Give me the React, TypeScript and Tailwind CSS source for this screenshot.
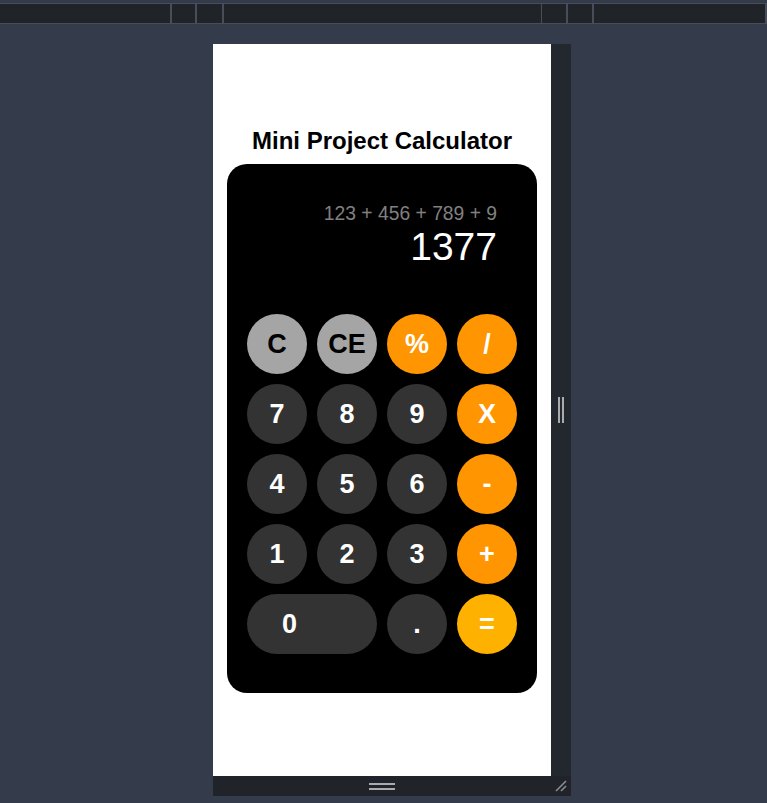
const keys = [
  { label: "C", kind: "fn" },
  { label: "CE", kind: "fn" },
  { label: "%", kind: "op" },
  { label: "/", kind: "op" },
  { label: "7", kind: "num" },
  { label: "8", kind: "num" },
  { label: "9", kind: "num" },
  { label: "X", kind: "op" },
  { label: "4", kind: "num" },
  { label: "5", kind: "num" },
  { label: "6", kind: "num" },
  { label: "-", kind: "op" },
  { label: "1", kind: "num" },
  { label: "2", kind: "num" },
  { label: "3", kind: "num" },
  { label: "+", kind: "op" },
  { label: "0", kind: "zero" },
  { label: ".", kind: "num" },
  { label: "=", kind: "eq" },
];

const keyStyles: Record<string, string> = {
  fn: "bg-[#a5a5a5] text-black",
  op: "bg-[#ff9500] text-white",
  num: "bg-[#333333] text-white",
  zero: "col-span-2 bg-[#333333] text-white justify-start pl-[35px]",
  eq: "bg-[#ffb100] text-white",
};

function Calculator() {
  return (
    <div className="mx-[14px] rounded-[20px] bg-black px-5 pt-10 pb-[39px]">
      <div className="flex flex-col items-end pr-5">
        <div className="text-[19.3px] leading-[20px] text-[#808080]">123 + 456 + 789 + 9</div>
        <div className="text-[39px] leading-[46px] text-white">1377</div>
      </div>
      <div className="mt-[44px] grid grid-cols-4 gap-[10px]">
        {keys.map((k) => (
          <button
            key={k.label}
            className={
              "flex h-[60px] items-center justify-center rounded-full text-[27px] font-bold " +
              keyStyles[k.kind]
            }
          >
            {k.label}
          </button>
        ))}
      </div>
    </div>
  );
}

function TopBar() {
  const dividers = [170, 195, 222, 541, 567, 593, 766];
  return (
    <div className="pt-[3px]">
      <div className="flex h-[21px] border-y border-[#474d59] bg-[#202328]">
        {dividers.map((x, i) => (
          <div
            key={x}
            className="h-full w-[2px] bg-[#474d59]"
            style={{ marginLeft: i === 0 ? x : x - dividers[i - 1] - 2 }}
          />
        ))}
      </div>
    </div>
  );
}

export default function App() {
  return (
    <div className="h-[803px] w-full overflow-hidden bg-[#343b4b]" style={{ fontFamily: '"Liberation Sans", Arial, sans-serif' }}>
      <TopBar />
      <div className="ml-[213px] mt-5 w-[358px]">
        <div className="flex">
          <div className="h-[732px] w-[338px] bg-white pt-[83px]">
            <h1 className="mb-[9px] text-center text-[24px] leading-[28px] font-bold text-black">
              Mini Project Calculator
            </h1>
            <Calculator />
          </div>
          <div className="flex w-5 items-center justify-center gap-[2px] bg-[#23272e]">
            <div className="h-[26px] w-[2px] bg-[#a9abad]" />
            <div className="h-[26px] w-[2px] bg-[#a9abad]" />
          </div>
        </div>
        <div className="flex h-5 bg-[#202329]">
          <div className="flex w-[338px] flex-col items-center justify-center gap-[3px]">
            <div className="h-[2px] w-[26px] bg-[#a9abad]" />
            <div className="h-[2px] w-[26px] bg-[#a9abad]" />
          </div>
          <div className="flex w-5 items-center justify-center">
            <svg width="14" height="14" viewBox="0 0 14 14" fill="none" stroke="#8a8d92" strokeWidth="1.6">
              <path d="M2 12 L12 2" />
              <path d="M7 12 L12 7" />
            </svg>
          </div>
        </div>
      </div>
    </div>
  );
}
